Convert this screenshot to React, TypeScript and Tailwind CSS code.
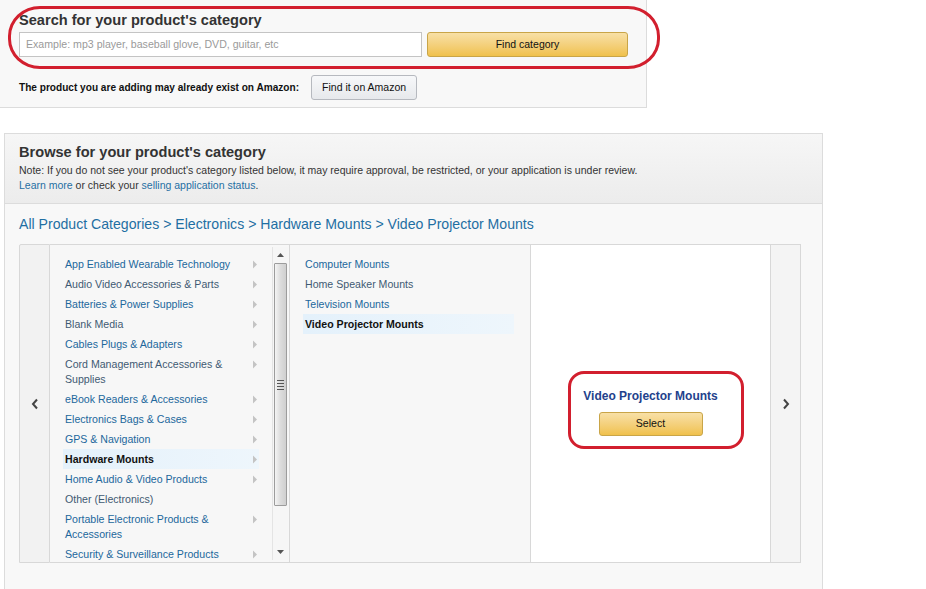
import React from "react";

const col1: { t: string; two?: boolean; sel?: boolean; gray?: boolean; noArrow?: boolean }[] = [
  { t: "App Enabled Wearable Technology" },
  { t: "Audio Video Accessories & Parts", gray: true },
  { t: "Batteries & Power Supplies" },
  { t: "Blank Media", gray: true },
  { t: "Cables Plugs & Adapters" },
  { t: "Cord Management Accessories & Supplies", two: true, gray: true },
  { t: "eBook Readers & Accessories" },
  { t: "Electronics Bags & Cases" },
  { t: "GPS & Navigation" },
  { t: "Hardware Mounts", sel: true },
  { t: "Home Audio & Video Products" },
  { t: "Other (Electronics)", gray: true, noArrow: true },
  { t: "Portable Electronic Products & Accessories", two: true },
  { t: "Security & Surveillance Products" },
];

const col2: { t: string; sel?: boolean; gray?: boolean }[] = [
  { t: "Computer Mounts" },
  { t: "Home Speaker Mounts", gray: true },
  { t: "Television Mounts" },
  { t: "Video Projector Mounts", sel: true },
];

function Chevron({ left = false, cls = "" }: { left?: boolean; cls?: string }) {
  return (
    <svg width="8" height="12" viewBox="0 0 8 12" className={cls}>
      <path
        d={left ? "M6 1.5 L2 6 L6 10.5" : "M2 1.5 L6 6 L2 10.5"}
        fill="none"
        stroke="currentColor"
        strokeWidth="2"
      />
    </svg>
  );
}

function SmallArrow() {
  return (
    <svg width="6" height="9" viewBox="0 0 6 9" className="text-[#c4c4c4]">
      <path d="M1 0.5 L5 4.5 L1 8.5 Z" fill="currentColor" />
    </svg>
  );
}

export default function App() {
  return (
    <div className="relative w-[926px] h-[589px] overflow-hidden bg-white font-['Liberation_Sans',Arial,sans-serif] text-[#111]">
      {/* Search box */}
      <div className="w-[647px] h-[108px] bg-[#f8f8f8] border-r border-b border-[#dcdcdc] pl-[19px] pt-[11px]">
        <h2 className="text-[14.6px] leading-[18px] font-bold text-[#333]">Search for your product's category</h2>
        <div className="mt-[3px] flex gap-[5px]">
          <div className="w-[403px] h-[25px] border border-[#c4c4c4] bg-white flex items-center pl-[6px] text-[10.6px] text-[#9a9a9a]">
            Example: mp3 player, baseball glove, DVD, guitar, etc
          </div>
          <div className="w-[201px] h-[25px] rounded-[3px] border border-[#c9a548] bg-gradient-to-b from-[#f8e0a6] to-[#f0c14b] flex items-center justify-center text-[10.5px] text-[#111]">
            Find category
          </div>
        </div>
        <div className="mt-[18px] flex items-center">
          <span className="text-[10.1px] font-bold text-[#111]">The product you are adding may already exist on Amazon:</span>
          <div className="ml-[12px] w-[106px] h-[25px] rounded-[3px] border border-[#b6b9bf] bg-gradient-to-b from-[#f7f8fa] to-[#e7e9ec] flex items-center justify-center text-[10.5px] text-[#111]">
            Find it on Amazon
          </div>
        </div>
      </div>

      {/* Browse box */}
      <div className="mt-[25px] ml-[4px] w-[819px] h-[470px] border border-[#dcdcdc] bg-[#f8f8f8]">
        <div className="h-[70px] border-b border-[#dcdcdc] bg-gradient-to-b from-[#f6f6f6] to-[#ececec] pl-[14px] pt-[9px]">
          <h2 className="text-[14.6px] leading-[18px] font-bold text-[#333]">Browse for your product's category</h2>
          <p className="mt-[2px] text-[10.5px] leading-[15px] text-[#333]">
            Note: If you do not see your product's category listed below, it may require approval, be restricted, or your application is under review.
          </p>
          <p className="text-[10.5px] leading-[15px] text-[#333]">
            <span className="text-[#1f6fa3]">Learn more</span> or check your <span className="text-[#1f6fa3]">selling application status</span>.
          </p>
        </div>
        <div className="pl-[14px] pt-[10px] h-[40px] text-[14.1px] leading-[20px] text-[#1f6fa3]">
          All Product Categories &gt; Electronics &gt; Hardware Mounts &gt; Video Projector Mounts
        </div>

        {/* Browser */}
        <div className="ml-[14px] flex h-[319px]">
          <div className="w-[31px] border border-[#d8d8d8] rounded-tl-[2px] bg-[#f2f2f2] flex items-center justify-center text-[#444]">
            <Chevron left />
          </div>
          <div className="w-[240px] border-y border-r border-[#d8d8d8] bg-[#f7f7f7] flex overflow-hidden">
            <div className="flex-1 pl-[13px] pr-[13px] pt-[9px] overflow-hidden">
              {col1.map((it) => (
                <div
                  key={it.t}
                  className={
                    "flex items-start justify-between pl-[2px] pr-[1px] py-[2.5px] " +
                    (it.sel ? "bg-gradient-to-r from-[#e4f1fb] to-[#eef6fc]" : "")
                  }
                >
                  <span
                    className={
                      "block text-[10.6px] leading-[15px] w-[170px] " +
                      (it.sel ? "font-bold text-[#111]" : it.gray ? "text-[#3f5a73]" : "text-[#22679c]")
                    }
                  >
                    {it.t}
                  </span>
                  {!it.noArrow && (
                    <span className="h-[15px] flex items-center">
                      <SmallArrow />
                    </span>
                  )}
                </div>
              ))}
            </div>
            <div className="w-[16px] my-[2px] mr-[1px] flex flex-col border-l border-[#e4e4e4] bg-[#f6f6f6]">
              <div className="h-[16px] flex items-center justify-center">
                <svg width="7" height="4" viewBox="0 0 7 4"><path d="M0 4 L3.5 0 L7 4 Z" fill="#555" /></svg>
              </div>
              <div className="h-[243px] mx-[1px] border border-[#9c9c9c] rounded-[1px] bg-gradient-to-r from-[#f4f4f4] via-[#dcdcdc] to-[#cfcfcf] flex items-center justify-center">
                <div className="flex flex-col gap-[2px]">
                  <div className="w-[7px] h-[1px] bg-[#555]" />
                  <div className="w-[7px] h-[1px] bg-[#555]" />
                  <div className="w-[7px] h-[1px] bg-[#555]" />
                  <div className="w-[7px] h-[1px] bg-[#555]" />
                </div>
              </div>
              <div className="flex-1 flex items-end justify-center pb-[6px]">
                <svg width="7" height="4" viewBox="0 0 7 4"><path d="M0 0 L3.5 4 L7 0 Z" fill="#555" /></svg>
              </div>
            </div>
          </div>
          <div className="w-[241px] border-y border-r border-[#d8d8d8] bg-[#f7f7f7] pl-[13px] pr-[16px] pt-[9px]">
            {col2.map((it) => (
              <div
                key={it.t}
                className={
                  "pl-[2px] py-[2.5px] text-[10.6px] leading-[15px] " +
                  (it.sel
                    ? "bg-gradient-to-r from-[#e4f1fb] to-[#eef6fc] font-bold text-[#111]"
                    : it.gray
                    ? "text-[#3f5a73]"
                    : "text-[#22679c]")
                }
              >
                {it.t}
              </div>
            ))}
          </div>
          <div className="w-[240px] border-y border-r border-[#d8d8d8] bg-white flex flex-col items-center justify-center pt-[18px]">
            <div className="text-[12px] leading-[15px] font-bold text-[#23418c]">Video Projector Mounts</div>
            <div className="mt-[8px] w-[104px] h-[24px] rounded-[3px] border border-[#c9a548] bg-gradient-to-b from-[#f8e0a6] to-[#f0c14b] flex items-center justify-center text-[10.6px] text-[#111]">
              Select
            </div>
          </div>
          <div className="w-[30px] border-y border-r border-[#d8d8d8] bg-[#f4f4f4] flex items-center justify-center text-[#444]">
            <Chevron />
          </div>
        </div>
      </div>

      {/* Red annotations */}
      <div className="absolute left-[8px] top-[6px] w-[652px] h-[63px] border-[3px] border-[#d21f2e] rounded-[32px/30px]" />
      <div className="absolute left-[568px] top-[371px] w-[176px] h-[78px] border-[3px] border-[#d21f2e] rounded-[16px]" />
    </div>
  );
}
